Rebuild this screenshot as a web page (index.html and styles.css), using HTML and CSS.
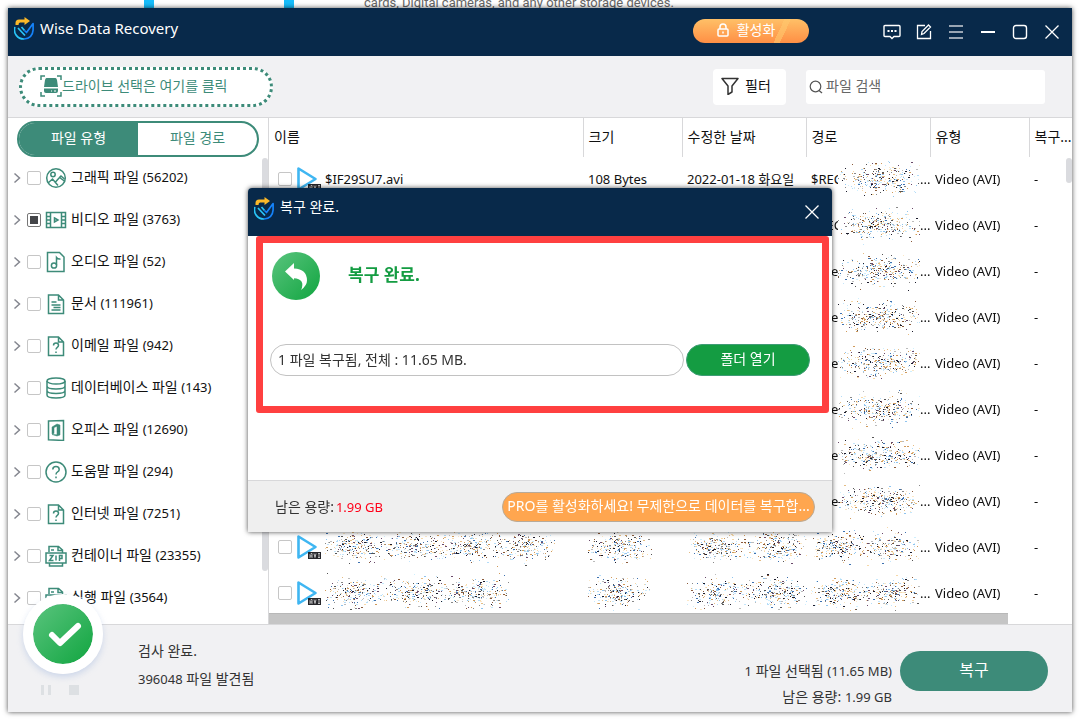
FILE: index.html
```html
<!DOCTYPE html>
<html lang="ko">
<head>
    <meta charset="UTF-8">
    <meta name="viewport" content="width=device-width, initial-scale=1.0">
    <title>Wise Data Recovery</title>
    <link rel="stylesheet" href="styles.css">
</head>
<body>

<!-- shared icons -->
<svg class="sprite" width="0" height="0" aria-hidden="true">
    <symbol id="logo" viewBox="0 0 20 24">
        <path d="M1.500 8V6q0-3.500 3.500-3.500h5.500V0L16 4l-5.500 4V5.500H6Q4.500 5.500 4.500 8z" fill="#fbb829"/>
        <path d="M.9 10a9.200 9.200 0 0 0 9.100 12M4 11l7 7.500M7.500 10l3 3.500" fill="none" stroke="#28c4f7" stroke-width="1.700"/>
        <path d="M10 22q8.500-.5 9.100-9V6.500L12.500 15.500l-2-2" fill="none" stroke="#1583fa" stroke-width="1.700" stroke-linejoin="round"/>
    </symbol>
    <symbol id="chevron" viewBox="0 0 8 12">
        <path d="M1.500 1.500l5 4.500-5 4.500" fill="none" stroke="#84868f" stroke-width="1.500"/>
    </symbol>
    <symbol id="close" viewBox="0 0 16 16">
        <path d="M1.500 1.500l13 13M14.500 1.500l-13 13" fill="none" stroke="#fff" stroke-width="1.300"/>
    </symbol>
    <symbol id="i-image" viewBox="0 0 22 22">
        <circle cx="11" cy="11" r="9.300"/><circle cx="8" cy="7.500" r="2.200"/>
        <path d="M3 16l4.500-4 5.500 6.500M10.500 15l4-4.500 5.500 4M14 11l2-2 3.500 3"/>
    </symbol>
    <symbol id="i-video" viewBox="0 0 22 22">
        <path d="M1.500 3.500h19v15h-19zM5.500 3.500v15M16.500 3.500v15M1.500 7.500h4M1.500 11h4M1.500 14.500h4M16.500 7.500h4M16.500 11h4M16.500 14.500h4M9.500 9l3.500 2-3.500 2z"/>
    </symbol>
    <symbol id="i-audio" viewBox="0 0 22 22">
        <path d="M2.500 1.500h12l4.500 4.500v14.500h-16.500zM11.500 14V6.500q1.500 2 4 1.500"/><circle cx="9" cy="14.500" r="2.600"/>
    </symbol>
    <symbol id="i-doc" viewBox="0 0 22 22">
        <path d="M3.500 2h10l5 5v13.500h-15zM13.500 2v5h5M6.500 9h5M6.500 12h9M8.500 14.500h7M6.500 17h9"/>
    </symbol>
    <symbol id="i-unknown" viewBox="0 0 22 22">
        <path d="M3.500 2h10l5 5v13.500h-15zM13.500 2v5h5M8.500 10.500q0-2.500 2.500-2.500t2.500 2.300q0 1.200-1.200 2T11 14.500M11 16.500v1.500"/>
    </symbol>
    <symbol id="i-db" viewBox="0 0 22 22">
        <ellipse cx="11" cy="4" rx="9" ry="3"/>
        <path d="M2 4v14q0 3 9 3t9-3V4M2 9q0 3 9 3t9-3M2 13.500q0 3 9 3t9-3"/>
    </symbol>
    <symbol id="i-office" viewBox="0 0 22 22">
        <path d="M3.500 2l15-.5v20l-15-.8z"/>
        <path d="M7 8l5-3 3 1v10l-3 1-5-1.500 5 .3V7.300L9 8.500v6L7 15z" fill="#3d8b79" stroke-width=".5"/>
    </symbol>
    <symbol id="i-help" viewBox="0 0 22 22">
        <circle cx="11" cy="11" r="10"/>
        <path d="M7.800 8.500q0-3 3.200-3t3.200 3q0 1.400-1.600 2.300T11 13.500M11 15.500v1.700"/>
    </symbol>
    <symbol id="i-zip" viewBox="0 0 22 22">
        <path d="M4 7V1.500h9.500L17.500 5v2.500M13 1.500V5.500h4M6 5h3M1 8h20v10H1zM4.500 18v3h13v-3"/>
        <path d="M4.500 10.500h3.500l-3.500 5h4M11 10.500v5M14.500 16v-5.500h2.500v3h-2.500"/>
    </symbol>
    <symbol id="avi" viewBox="0 0 26 26">
        <path d="M2.500 2.500v21L19.500 13z" fill="#fff" stroke="#3fb6f2" stroke-width="2.600" stroke-linejoin="round"/>
        <rect x="12" y="18" width="13" height="7" fill="#26262a"/>
        <path d="M14 24v-3.500l1-1h1V24M14 22h2M18 19.500l1 4 1-4M22 19.500h2M23 19.500v4M22 23.500h2" fill="none" stroke="#ddd" stroke-width=".8"/>
    </symbol>
</svg>

<div class="backdrop">
    <i class="tick"></i><i class="tick"></i>
    <p>cards, Digital cameras, and any other storage devices.</p>
</div>

<div class="window">
    <header class="titlebar">
        <svg class="logo"><use href="#logo"/></svg>
        <h1>Wise Data Recovery</h1>
        <button type="button" class="activate">
            <svg width="12" height="14" viewBox="0 0 12 14" fill="none" stroke="#fff" stroke-width="1.500"><rect x="1" y="6" width="10" height="7" rx="1"/><path d="M3 6V4a3 3 0 0 1 6 0v2M6 8.500v2"/></svg>
            활성화
        </button>
        <nav class="controls">
            <button type="button" aria-label="의견"><svg width="18" height="16" viewBox="0 0 18 16" fill="none" stroke="#fff" stroke-width="1.400"><path d="M2 1.500h14q1 0 1 1v9q0 1-1 1h-5l-2 2-2-2H2q-1 0-1-1v-9q0-1 1-1z"/><path d="M4.500 7h2M8 7h2M11.500 7h2" stroke-width="1.800"/></svg></button>
            <button type="button" aria-label="편집"><svg width="16" height="16" viewBox="0 0 16 16" fill="none" stroke="#fff" stroke-width="1.300"><path d="M9 1.500H1.500v13h13V7M5.500 10.500l.5-3L12.500 1l2 2L8 9.500z"/></svg></button>
            <button type="button" aria-label="메뉴"><svg width="16" height="16" viewBox="0 0 16 16" stroke="#c9ced6" stroke-width="1.500"><path d="M1 2h14M1 8h14M1 14h14"/></svg></button>
            <button type="button" aria-label="최소화"><svg width="16" height="16" viewBox="0 0 16 16"><path d="M1 7h14v2H1z" fill="#fff"/></svg></button>
            <button type="button" aria-label="최대화"><svg width="16" height="16" viewBox="0 0 16 16"><rect x="1.500" y="1.500" width="13" height="13" rx="2.500" fill="none" stroke="#fff" stroke-width="1.400"/></svg></button>
            <button type="button" aria-label="닫기"><svg width="16" height="16"><use href="#close"/></svg></button>
        </nav>
    </header>

    <div class="toolbar">
        <button type="button" class="drive">
            <svg width="22" height="22" viewBox="0 0 22 22"><path d="M1 5V1h4M17 1h4v4M21 17v4h-4M5 21H1v-4" fill="none" stroke="#3d8b79" stroke-width="1.500"/><path d="M6.500 3h9q1 0 1.500 2l1 7H4l1-7q.5-2 1.500-2zM4 13.500h14v2.500q0 2-2 2H6q-2 0-2-2z" fill="#3d8b79"/><path d="M11 16h1M14 16h2" stroke="#fff" stroke-width="1.200"/></svg>드라이브 선택은 여기를 클릭
        </button>
        <button type="button" class="filter">
            <svg width="18" height="18" viewBox="0 0 18 18"><path d="M1 1.500h16l-6 7.500v6l-4 2.500V9z" fill="none" stroke="#333" stroke-width="1.500" stroke-linejoin="round"/></svg>
            필터
        </button>
        <label class="search">
            <svg width="14" height="14" viewBox="0 0 14 14"><path d="M10 10.500l3 2.500" stroke="#555" stroke-width="1.300"/><circle cx="6.500" cy="6.500" r="5.300" fill="none" stroke="#555" stroke-width="1.200"/></svg>
            <input type="text" placeholder="파일 검색" aria-label="파일 검색">
        </label>
    </div>

    <div class="main">
        <aside class="sidebar">
            <div class="tabs">
                <button type="button" class="active">파일 유형</button>
                <button type="button">파일 경로</button>
            </div>
            <div class="tree">
                <ul>
                    <li><svg class="chev"><use href="#chevron"/></svg><label><input type="checkbox"><svg class="ico"><use href="#i-image"/></svg><span>그래픽 파일 <small>(56202)</small></span></label></li>
                    <li><svg class="chev"><use href="#chevron"/></svg><label><input type="checkbox" checked><svg class="ico"><use href="#i-video"/></svg><span>비디오 파일 <small>(3763)</small></span></label></li>
                    <li><svg class="chev"><use href="#chevron"/></svg><label><input type="checkbox"><svg class="ico"><use href="#i-audio"/></svg><span>오디오 파일 <small>(52)</small></span></label></li>
                    <li><svg class="chev"><use href="#chevron"/></svg><label><input type="checkbox"><svg class="ico"><use href="#i-doc"/></svg><span>문서 <small>(111961)</small></span></label></li>
                    <li><svg class="chev"><use href="#chevron"/></svg><label><input type="checkbox"><svg class="ico"><use href="#i-unknown"/></svg><span>이메일 파일 <small>(942)</small></span></label></li>
                    <li><svg class="chev"><use href="#chevron"/></svg><label><input type="checkbox"><svg class="ico"><use href="#i-db"/></svg><span>데이터베이스 파일 <small>(143)</small></span></label></li>
                    <li><svg class="chev"><use href="#chevron"/></svg><label><input type="checkbox"><svg class="ico"><use href="#i-office"/></svg><span>오피스 파일 <small>(12690)</small></span></label></li>
                    <li><svg class="chev"><use href="#chevron"/></svg><label><input type="checkbox"><svg class="ico"><use href="#i-help"/></svg><span>도움말 파일 <small>(294)</small></span></label></li>
                    <li><svg class="chev"><use href="#chevron"/></svg><label><input type="checkbox"><svg class="ico"><use href="#i-unknown"/></svg><span>인터넷 파일 <small>(7251)</small></span></label></li>
                    <li><svg class="chev"><use href="#chevron"/></svg><label><input type="checkbox"><svg class="ico"><use href="#i-zip"/></svg><span>컨테이너 파일 <small>(23355)</small></span></label></li>
                    <li><svg class="chev"><use href="#chevron"/></svg><label><input type="checkbox"><svg class="ico"><use href="#i-zip"/></svg><span>실행 파일 <small>(3564)</small></span></label></li>
                </ul>
                <div class="vthumb"></div>
            </div>
        </aside>

        <section class="files">
            <div class="table-wrap">
                <table>
                    <colgroup>
                        <col><col class="c-size"><col class="c-date"><col class="c-path"><col class="c-type"><col class="c-rec">
                    </colgroup>
                    <thead>
                        <tr><th>이름</th><th>크기</th><th>수정한 날짜</th><th>경로</th><th>유형</th><th>복구...</th></tr>
                    </thead>
                    <tbody>
                        <tr>
                            <td><label class="name"><input type="checkbox"><svg class="avi"><use href="#avi"/></svg>$IF29SU7.avi</label></td>
                            <td>108 Bytes</td>
                            <td>2022-01-18 화요일</td>
                            <td><div class="path"><span>$REC</span><canvas width="82" height="40"></canvas>...</div></td>
                            <td>Video (AVI)</td><td>-</td>
                        </tr>
                        <tr>
                            <td></td><td></td><td></td>
                            <td><div class="path"><span>$REC</span><canvas width="82" height="40"></canvas>...</div></td>
                            <td>Video (AVI)</td><td>-</td>
                        </tr>
                        <tr>
                            <td></td><td></td><td></td>
                            <td><div class="path"><span class="tail">eD</span><canvas width="82" height="40"></canvas>...</div></td>
                            <td>Video (AVI)</td><td>-</td>
                        </tr>
                        <tr>
                            <td></td><td></td><td></td>
                            <td><div class="path"><span class="tail">eD</span><canvas width="82" height="40"></canvas>...</div></td>
                            <td>Video (AVI)</td><td>-</td>
                        </tr>
                        <tr>
                            <td></td><td></td><td></td>
                            <td><div class="path"><span class="tail">eD</span><canvas width="82" height="40"></canvas>...</div></td>
                            <td>Video (AVI)</td><td>-</td>
                        </tr>
                        <tr>
                            <td></td><td></td><td></td>
                            <td><div class="path"><span class="tail">eD</span><canvas width="82" height="40"></canvas>...</div></td>
                            <td>Video (AVI)</td><td>-</td>
                        </tr>
                        <tr>
                            <td></td><td></td><td></td>
                            <td><div class="path"><span class="tail">eD</span><canvas width="82" height="40"></canvas>...</div></td>
                            <td>Video (AVI)</td><td>-</td>
                        </tr>
                        <tr>
                            <td></td><td></td><td></td>
                            <td><div class="path"><span class="tail">eD</span><canvas width="82" height="40"></canvas>...</div></td>
                            <td>Video (AVI)</td><td>-</td>
                        </tr>
                        <tr>
                            <td><label class="name"><input type="checkbox" aria-label="파일"><svg class="avi"><use href="#avi"/></svg><canvas width="230" height="40"></canvas></label></td>
                            <td><canvas width="66" height="40"></canvas></td>
                            <td><canvas width="120" height="40"></canvas></td>
                            <td><div class="path"><canvas width="109" height="40"></canvas>...</div></td>
                            <td>Video (AVI)</td><td>-</td>
                        </tr>
                        <tr>
                            <td><label class="name"><input type="checkbox" aria-label="파일"><svg class="avi"><use href="#avi"/></svg><canvas width="184" height="40"></canvas></label></td>
                            <td><canvas width="62" height="40"></canvas></td>
                            <td><canvas width="120" height="40"></canvas></td>
                            <td><div class="path"><canvas width="109" height="40"></canvas>...</div></td>
                            <td>Video (AVI)</td><td>-</td>
                        </tr>
                    </tbody>
                </table>
                <div class="vthumb short"></div>
            </div>
            <div class="hthumb"></div>
        </section>
    </div>

    <footer class="statusbar">
        <div class="scan">
            <div class="badge"><svg width="60" height="60" viewBox="0 0 60 60"><path d="M19 31l8 8 18-17" fill="none" stroke="#fff" stroke-width="6" stroke-linecap="round" stroke-linejoin="round"/></svg></div>
            <div class="player">
                <button type="button" disabled aria-label="일시 중지"><svg width="10" height="10"><path d="M0 0h3v10H0zM7 0h3v10H7z" fill="#dde0e3"/></svg></button>
                <button type="button" disabled aria-label="중지"><svg width="10" height="10"><path d="M0 0h10v10H0z" fill="#dde0e3"/></svg></button>
            </div>
        </div>
        <div class="result">
            <p>검사 완료.</p>
            <p><small>396048</small> 파일 발견됨</p>
        </div>
        <div class="summary">
            <p><small>1</small> 파일 선택됨 <small>(11.65 MB)</small></p>
            <p>남은 용량: <small>1.99 GB</small></p>
        </div>
        <button type="button" class="recover">복구</button>
    </footer>
</div>

<div class="overlay">
    <div class="dialog" role="dialog" aria-labelledby="dialog-title">
        <header class="titlebar">
            <svg class="logo"><use href="#logo"/></svg>
            <h2 id="dialog-title">복구 완료.</h2>
            <button type="button" class="close" aria-label="닫기"><svg width="16" height="16"><use href="#close"/></svg></button>
        </header>
        <div class="dialog-body">
            <div class="highlight">
                <div class="done">
                    <span class="done-icon"><svg width="48" height="48" viewBox="0 0 48 48"><path d="M13 19.500L22 11v5.500q13 .5 13 12 0 5-6 9.500 2.500-5 .5-8.500-2-3-7.500-3.200V28z" fill="#fff"/></svg></span>
                    <strong>복구 완료.</strong>
                </div>
                <div class="output">
                    <input type="text" value="1 파일 복구됨, 전체 : 11.65 MB." aria-label="복구 결과" readonly>
                    <button type="button">폴더 열기</button>
                </div>
            </div>
        </div>
        <footer class="dialog-footer">
            <p>남은 용량:<small>1.99 GB</small></p>
            <button type="button">PRO를 활성화하세요! 무제한으로 데이터를 복구합...</button>
        </footer>
    </div>
</div>

<script src="noise.js"></script>
</body>
</html>
```
FILE: styles.css
```css
* {
    box-sizing: border-box;
}
body {
    margin: 0;
    height: 100vh;
    display: flex;
    flex-direction: column;
    overflow: hidden;
    background: #fff;
    color: #111;
    font: 14px/20px "Noto Sans", "Noto Sans CJK KR", sans-serif;
}
h1, h2, p, ul {
    margin: 0;
    padding: 0;
    font-weight: normal;
}
button, input {
    font: inherit;
    color: inherit;
}
button {
    padding: 0 0 2px;
    border: none;
    background: none;
    cursor: pointer;
    white-space: nowrap;
}
small {
    font-size: 13px;
}
svg {
    flex: none;
}
input[type="checkbox"] {
    appearance: none;
    flex: none;
    width: 14px;
    height: 14px;
    margin: 0;
    border: 1px solid #c6c6c6;
    border-radius: 2px;
    background: #fff;
}
input[type="checkbox"]:checked {
    border-color: #777;
    background: #444549 content-box;
    padding: 2px;
}
.sprite {
    position: absolute;
}

/* page behind the window */
.backdrop {
    flex: none;
    display: flex;
    gap: 130px;
    height: 8px;
    padding-left: 144px;
    color: #666;
    font: 13px/6px Roboto, sans-serif;
}
.backdrop p {
    margin-left: -60px;
    white-space: nowrap;
}
.tick {
    width: 10px;
    height: 8px;
    background: #18bdfb;
}

.window {
    position: relative;
    flex: 1;
    min-height: 0;
    display: flex;
    flex-direction: column;
    margin: 0 8px 8px;
    background: #fff;
    box-shadow: 0 0 5px rgba(0, 0, 0, 0.7);
}
.titlebar {
    flex: none;
    display: flex;
    align-items: center;
    height: 48px;
    padding: 0 4px 0 6px;
    background: #08294a;
    color: #fff;
}
.logo {
    width: 20px;
    height: 24px;
    margin: 0 6px 6px 0;
}
.titlebar h1 {
    flex: 1;
    padding-bottom: 8px;
    font-size: 15px;
}
.activate {
    display: flex;
    align-items: center;
    justify-content: center;
    gap: 8px;
    width: 116px;
    height: 24px;
    margin: 0 67px 2px 0;
    padding-right: 10px;
    border-radius: 12px;
    background: linear-gradient(115deg, transparent 72%, rgba(255, 200, 110, 0.6) 72%, rgba(255, 200, 110, 0.6) 77%, transparent 77%), linear-gradient(#ffc067, #ff8f45);
}
.controls {
    display: flex;
}
.controls button {
    display: grid;
    place-items: center;
    width: 32px;
    height: 32px;
    padding: 0;
}

.toolbar {
    flex: none;
    display: flex;
    align-items: center;
    gap: 20px;
    height: 62px;
    padding: 0 27px 0 11px;
    border-bottom: 1px solid #d8d8da;
    background: #f1f1f3;
}
.drive {
    display: flex;
    align-items: center;
    width: 254px;
    height: 40px;
    margin-right: auto;
    padding-left: 18px;
    border: 3px dotted #3d8b79;
    border-radius: 20px;
    background: #fff;
    color: #3d8b79;
}
.filter {
    display: flex;
    align-items: center;
    gap: 6px;
    width: 73px;
    height: 36px;
    padding-left: 8px;
    border-radius: 4px;
    background: #fff;
}
.search {
    display: flex;
    align-items: center;
    gap: 3px;
    width: 239px;
    height: 34px;
    padding-left: 3px;
    border-radius: 3px;
    background: #fff;
}
.search input {
    flex: 1;
    min-width: 0;
    padding: 0 0 2px;
    border: none;
    outline: none;
}
.search input::placeholder {
    color: #666;
}

.main {
    flex: 1;
    min-height: 0;
    display: flex;
}
.sidebar {
    flex: none;
    width: 261px;
    padding-top: 3px;
    border-right: 1px solid #d8d8da;
    overflow: hidden;
}
.tabs {
    display: flex;
    height: 36px;
    margin: 0 9px;
    border: 2px solid #3d8b79;
    border-radius: 18px;
    overflow: hidden;
}
.tabs button {
    flex: 1;
    color: #3d8b79;
}
.tabs .active {
    background: #3d8b79;
    color: #fff;
}
.tree {
    display: flex;
}
.tree ul {
    flex: 1;
    list-style: none;
}
.tree li {
    display: flex;
    align-items: center;
    gap: 6px;
    height: 42px;
    padding-left: 5px;
}
.tree label {
    display: flex;
    align-items: center;
    gap: 4px;
}
.tree span {
    padding-bottom: 2px;
}
.chev {
    width: 8px;
    height: 12px;
}
.ico {
    width: 22px;
    height: 22px;
    fill: none;
    stroke: #3d8b79;
    stroke-width: 1.5;
}
.vthumb {
    width: 6px;
    height: 413px;
    margin-top: 1px;
    border-radius: 3px;
    background: #dadbdf;
}

.files {
    flex: 1;
    min-width: 0;
    display: flex;
    flex-direction: column;
}
.table-wrap {
    flex: 1;
    min-height: 0;
    position: relative;
    overflow: hidden;
}
.vthumb.short {
    position: absolute;
    top: 39px;
    right: 0;
    height: 25px;
}
.hthumb {
    flex: none;
    width: 92%;
    height: 11px;
    background: #c5c5c5;
    border-top: 1px solid #b8b8b8;
}
table {
    width: 100%;
    table-layout: fixed;
    border-collapse: collapse;
}
.c-size {
    width: 99px;
}
.c-date, .c-path {
    width: 124px;
}
.c-type {
    width: 99px;
}
.c-rec {
    width: 43px;
}
th {
    height: 39px;
    padding: 0 0 2px 5px;
    border-left: 1px solid #d8d8da;
    font-weight: normal;
    text-align: left;
    white-space: nowrap;
}
th:first-child {
    border-left: none;
}
td {
    height: 46px;
    padding: 0 0 2px 5px;
    font-size: 13px;
    white-space: nowrap;
}
td canvas {
    display: block;
    background: #fff;
}
.name {
    display: flex;
    align-items: center;
    padding-left: 4px;
}
.avi {
    width: 26px;
    height: 26px;
    margin: 0 3px 0 4px;
}
.path {
    display: flex;
    align-items: center;
}
.path span {
    flex: none;
    width: 27px;
}
.path .tail {
    padding-left: 20px;
}

.statusbar {
    flex: none;
    display: flex;
    height: 88px;
    padding-right: 24px;
    border-top: 1px solid #d8d8da;
    background: #f1f1f3;
    color: #333;
}
.scan {
    width: 130px;
    padding-left: 15px;
}
.badge {
    position: relative;
    width: 80px;
    height: 80px;
    margin-top: -31px;
    border: 10px solid #fff;
    border-radius: 50%;
    background: linear-gradient(135deg, #5ac47e, #11a540) padding-box;
    box-shadow: 0 3px 6px rgba(150, 175, 220, 0.4);
}
.player {
    display: flex;
    gap: 18px;
    padding: 11px 0 0 18px;
}
.player button {
    display: flex;
}
.result {
    flex: 1;
    display: flex;
    flex-direction: column;
    gap: 8px;
    padding-top: 16px;
}
.summary {
    display: flex;
    flex-direction: column;
    gap: 6px;
    padding: 36px 8px 0 0;
    text-align: right;
}
.recover {
    width: 148px;
    height: 40px;
    margin-top: 26px;
    border-radius: 20px;
    background: #3d8b79;
    color: #fff;
    font-size: 16px;
}

.overlay {
    position: fixed;
    inset: 0;
    display: grid;
    place-items: center;
}
.dialog {
    display: flex;
    flex-direction: column;
    width: 584px;
    height: 344px;
    border-radius: 4px 4px 0 0;
    background: #fff;
    box-shadow: 0 0 5px rgba(0, 0, 0, 0.7);
}
.dialog .titlebar {
    border-radius: 4px 4px 0 0;
}
.titlebar h2 {
    flex: 1;
    padding-bottom: 10px;
    font-size: 14px;
}
.close {
    display: grid;
    place-items: center;
    width: 32px;
    height: 32px;
    padding: 0;
}
.dialog-body {
    flex: 1;
    padding: 0 3px 0 8px;
}
.highlight {
    height: 177px;
    padding: 9px 12px 0 7px;
    border: 7px solid #ff4040;
    border-radius: 3px;
}
.done {
    display: flex;
    align-items: center;
    gap: 28px;
    padding-left: 2px;
}
.done-icon {
    width: 48px;
    height: 48px;
    border-radius: 50%;
    background: linear-gradient(135deg, #5ac47e, #11a540);
}
.done strong {
    padding-bottom: 2px;
    color: #149c42;
    font-size: 17px;
}
.output {
    display: flex;
    gap: 2px;
    margin-top: 44px;
}
.output input {
    flex: 1;
    min-width: 0;
    height: 32px;
    padding: 0 7px 2px;
    border: 1px solid #c2c2c2;
    border-radius: 16px;
    color: #333;
    outline: none;
}
.output button {
    width: 124px;
    height: 32px;
    border: 1px solid #3f9c75;
    border-radius: 16px;
    background: #149c42;
    color: #fff;
}
.dialog-footer {
    display: flex;
    align-items: center;
    justify-content: space-between;
    height: 52px;
    padding: 0 17px 0 27px;
    border-top: 1px solid #d8d8da;
    background: #efefef;
    color: #333;
}
.dialog-footer small {
    padding-left: 2px;
    color: #ff0019;
}
.dialog-footer button {
    width: 313px;
    height: 30px;
    border: 1px solid #b8aa98;
    border-radius: 15px;
    background: #ffa64f;
    color: #fff;
}
```
FILE: noise.js
```js
// scatter coloured specks over the hidden file names
var seed = 7;
function rand() {
    seed = (seed * 16807) % 2147483647;
    return seed / 2147483647;
}

var colors = ["#1b1b2b", "#555", "#888", "#8a5a3a", "#d09a5a", "#f6d8a8", "#3f72b0", "#8fc4ee", "#c4e6fb", "#6a4a6a", "#b4dcf8", "#e4bc84", "#cfeffd", "#fbe8c8", "#bbb"];

document.querySelectorAll("canvas").forEach(function (canvas) {
    var ctx = canvas.getContext("2d");
    var words = Math.max(1, Math.round(canvas.width / 60));
    var size = canvas.width / words;
    var count = canvas.width * 4;
    for (var i = 0; i < count; i++) {
        // denser towards the middle of each word and of the line
        var across = (rand() + rand()) / 2;
        var down = (rand() + rand() + rand() + rand()) / 4;
        var x = Math.floor((Math.floor(rand() * words) + 0.5 + (across - 0.5) * 1.2) * size);
        var y = Math.floor(canvas.height * (0.5 + (down - 0.5) * 1.2));
        ctx.fillStyle = colors[Math.floor(rand() * colors.length)];
        ctx.fillRect(x, y, rand() < 0.3 ? 2 : 1, 1);
    }
});
```
